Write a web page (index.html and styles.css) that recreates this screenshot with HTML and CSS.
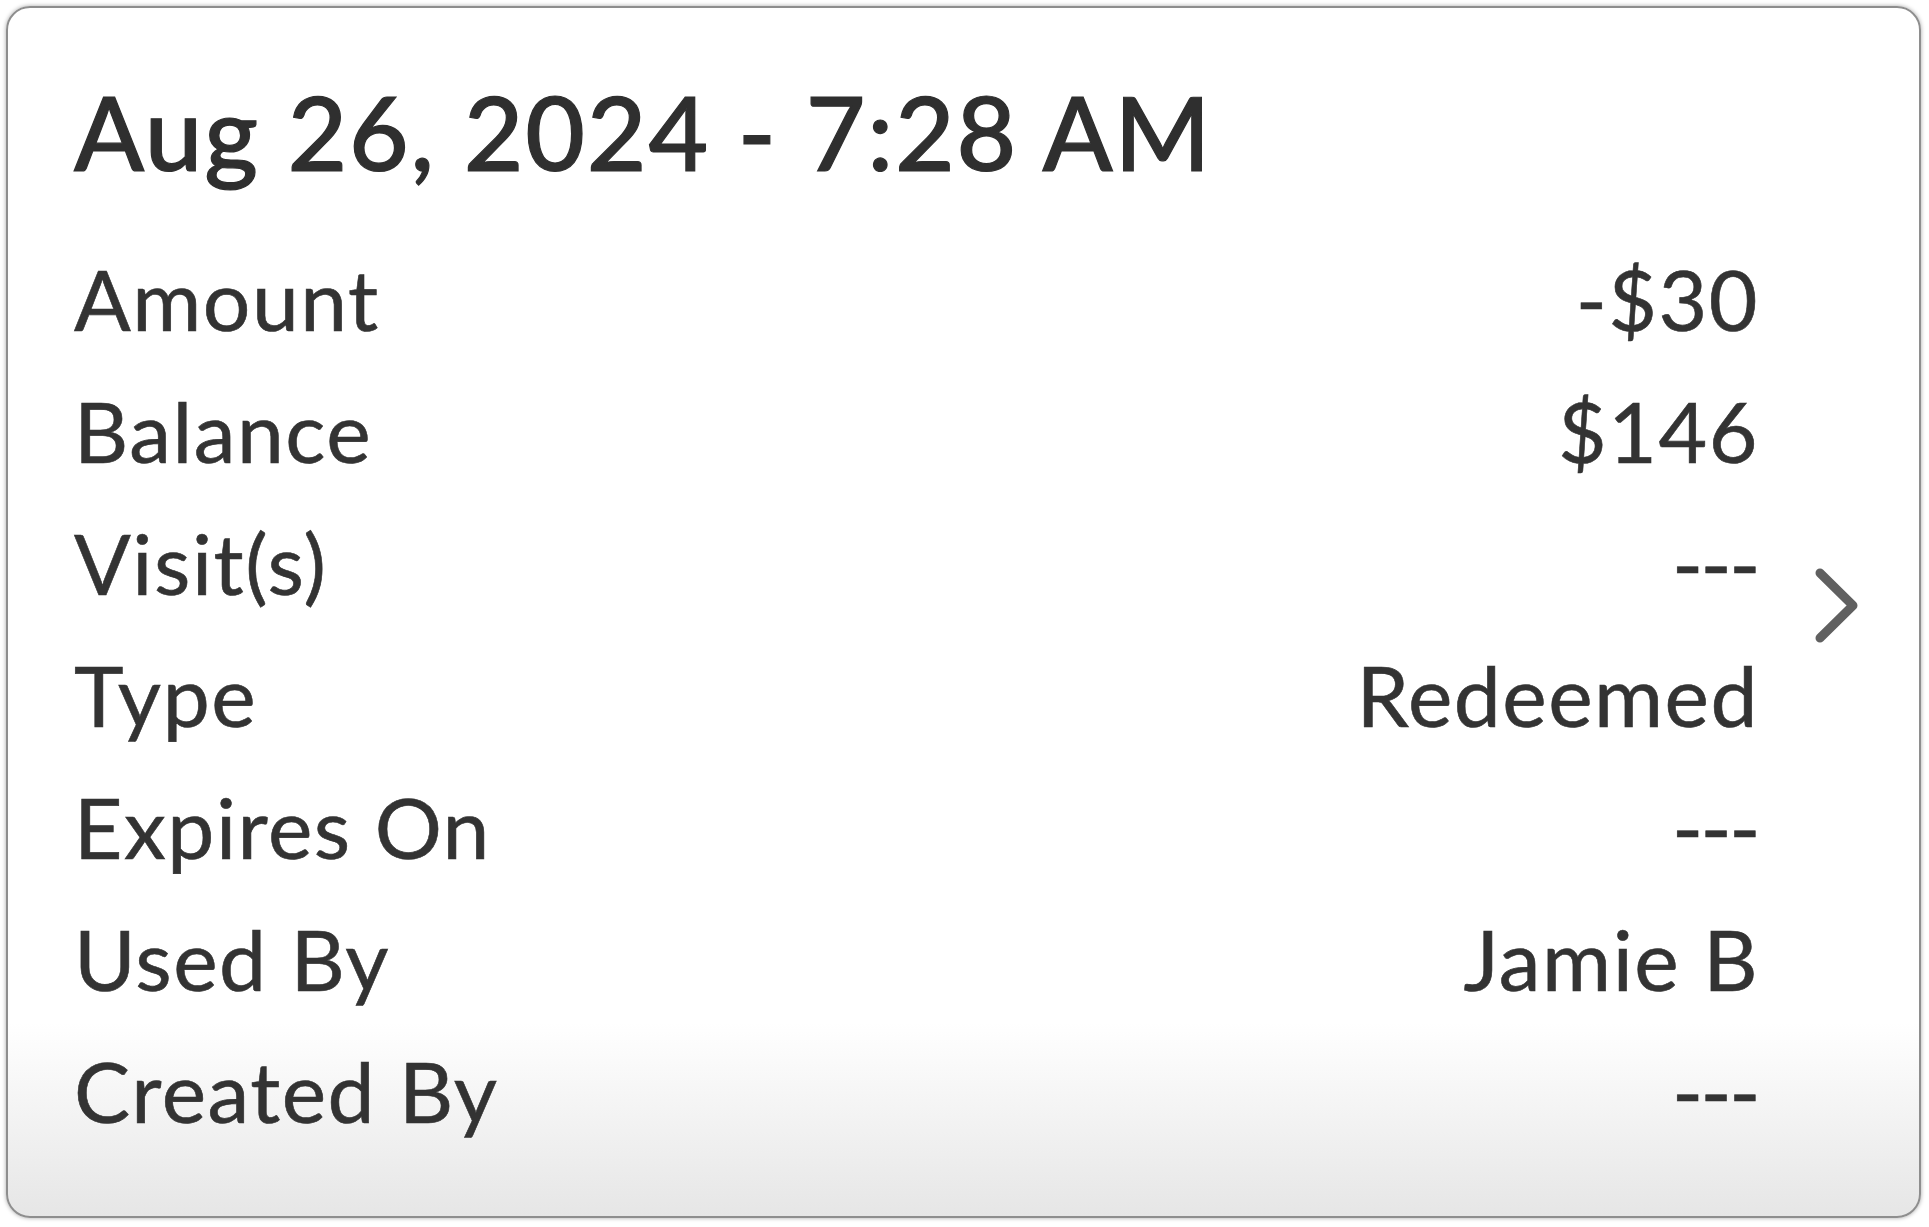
FILE: index.html
```html
<html lang="en"><head>
    <meta charset="UTF-8">
    <meta name="viewport" content="width=device-width, initial-scale=1.0">
    <title>Transaction</title>
    <link rel="stylesheet" href="styles.css">
</head>

<body>
    <div class="card">
        <div class="content">
            <h1 class="title">Aug 26, 2024 - 7:28 AM</h1>

            <div class="row">
                <div class="label">Amount</div>
                <div class="value">-$30</div>
            </div>
            <div class="row">
                <div class="label">Balance</div>
                <div class="value">$146</div>
            </div>
            <div class="row">
                <div class="label">Visit(s)</div>
                <div class="value empty">---</div>
            </div>
            <div class="row">
                <div class="label">Type</div>
                <div class="value">Redeemed</div>
            </div>
            <div class="row">
                <div class="label">Expires On</div>
                <div class="value empty">---</div>
            </div>
            <div class="row">
                <div class="label">Used By</div>
                <div class="value">Jamie B</div>
            </div>
            <div class="row">
                <div class="label">Created By</div>
                <div class="value empty">---</div>
            </div>
        </div>

        <div class="chevron">
            <svg width="43" height="75" viewBox="0 0 43 75">
                <path d="M5 5 L38 37.5 L5 70" fill="none" stroke="#606060" stroke-width="9" stroke-linecap="round" stroke-linejoin="round"/>
            </svg>
        </div>
    </div>
</body></html>
```

FILE: styles.css
```css
* {
    margin: 0;
    padding: 0;
    box-sizing: border-box;
    font-family: Lato, "Liberation Sans", sans-serif;
}

body {
    background: #fff;
    padding: 6px 8px 9px 6px;
}

.card {
    display: flex;
    height: 1212px;
    overflow: hidden;
    border: 2px solid #8e8e8e;
    border-radius: 24px;
    box-shadow: 0 0 4px rgba(0, 0, 0, 0.35);
    background: linear-gradient(to bottom, #fff 0%, #fff 84%, #e6e6e6 100%);
    padding: 0 61px 0 66px;
}

.content {
    flex: 1;
    color: #333;
}

.title {
    font-size: 103px;
    font-weight: 500;
    letter-spacing: 1.8px;
    line-height: 130px;
    margin-top: 58px;
    margin-bottom: 37px;
    color: #2f2f2f;
    -webkit-text-stroke: 1.2px #2f2f2f;
}

.row {
    display: flex;
    justify-content: space-between;
    font-size: 84px;
    letter-spacing: 1.5px;
    line-height: 132px;
    -webkit-text-stroke: 0.6px #333;
}

.value {
    margin-right: 2px;
}

.value.empty {
    letter-spacing: -2.5px;
    margin-right: 3px;
}

.chevron {
    align-self: center;
    margin-left: 54px;
    margin-bottom: 14px;
    display: flex;
}
```
